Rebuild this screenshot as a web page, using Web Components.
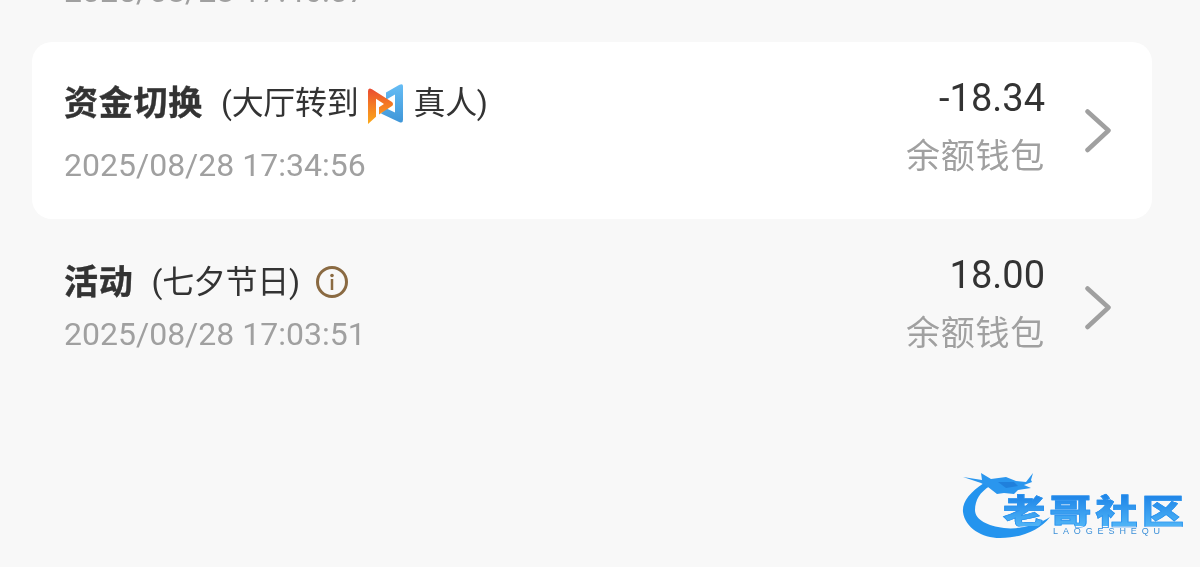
<!DOCTYPE html>
<html lang="zh">
<head>
<meta charset="utf-8">
<style>
	html, body{margin: 0; height: 100%; background: #f8f8f8; overflow: hidden}
	body{font-family: Roboto, "Noto Sans CJK SC", sans-serif}
</style>
</head>
<body>
<ledger-list>
	<ledger-row class="clipped" date="2025/08/28 17:46:07"></ledger-row>
	<ledger-row active date="2025/08/28 17:34:56" amount="-18.34" wallet="余额钱包">
		<span slot="title">资金切换</span>
		<span slot="note">(大厅转到</span>
		<game-logo slot="note"></game-logo>
		<span slot="note">真人)</span>
	</ledger-row>
	<ledger-row date="2025/08/28 17:03:51" amount="18.00" wallet="余额钱包">
		<span slot="title">活动</span>
		<span slot="note">(七夕节日)</span>
		<info-icon slot="note"></info-icon>
	</ledger-row>
</ledger-list>
<site-mark></site-mark>

<script>
class LedgerList extends HTMLElement{
	constructor() {
		super()
		let shadowRoot = this.attachShadow({mode: 'open'})
		shadowRoot.innerHTML = `
			<style>
				:host{
					display: flex;
					flex-direction: column;
					padding: 0 48px 0 32px;
					margin-top: -135px;
					filter: blur(.35px);
				}
			</style>
			<slot></slot>
		`
	}
}

class LedgerRow extends HTMLElement{
	constructor() {
		super()
		let shadowRoot = this.attachShadow({mode: 'open'})
		shadowRoot.innerHTML = `
			<style>
				:host{
					display: grid;
					grid-template-columns: 1fr auto 107px;
					height: 177px;
					box-sizing: border-box;
					padding-left: 32px;
					border-radius: 20px;
					color: #333;
				}
				:host([active]){
					background: #fff;
				}
				.left{
					display: flex;
					flex-direction: column;
					padding-top: 39px;
				}
				:host([active]) .left{
					padding-top: 37px;
				}
				:host(.clipped) .left{
					padding-top: 50px;
				}
				.head{
					display: flex;
					align-items: center;
					height: 42px;
				}
				.title{
					font-size: 34px;
					font-weight: 700;
					letter-spacing: .75px;
					-webkit-text-stroke: .4px #333;
					margin-right: 18px;
				}
				.note{
					display: flex;
					align-items: center;
					font-size: 32px;
					letter-spacing: -.3px;
				}
				.date{
					font-size: 32px;
					line-height: 38px;
					color: #a0a0a0;
					margin-top: 15px;
				}
				:host([active]) .date{
					margin-top: 25px;
				}
				.right{
					display: flex;
					flex-direction: column;
					align-items: flex-end;
					padding-top: 33px;
				}
				.amount{
					font-size: 38px;
					line-height: 46px;
				}
				.wallet{
					font-size: 34px;
					line-height: 46px;
					letter-spacing: .75px;
					color: #a0a0a0;
					margin-top: 12px;
				}
				.arrow{
					display: flex;
					align-items: center;
					justify-content: flex-end;
					padding-right: 38px;
				}
				:host(:not([amount])) .arrow{
					visibility: hidden;
				}
			</style>
			<div class="left">
				<div class="head">
					<span class="title"><slot name="title"></slot></span>
					<span class="note"><slot name="note"></slot></span>
				</div>
				<div class="date"></div>
			</div>
			<div class="right">
				<div class="amount"></div>
				<div class="wallet"></div>
			</div>
			<div class="arrow">
				<svg width="30" height="44" viewBox="0 0 30 44"><path d="M3.5 2.5 L24.5 21.500 L3.5 41" fill="none" stroke="#a0a0a0" stroke-width="4.5" stroke-linecap="round" stroke-linejoin="round"/></svg>
			</div>
		`
	}
	connectedCallback(){
		this.shadowRoot.querySelector(".date").textContent = this.getAttribute("date") || ""
		this.shadowRoot.querySelector(".amount").textContent = this.getAttribute("amount") || ""
		this.shadowRoot.querySelector(".wallet").textContent = this.getAttribute("wallet") || ""
	}
}

class GameLogo extends HTMLElement{
	constructor() {
		super()
		let shadowRoot = this.attachShadow({mode: 'open'})
		shadowRoot.innerHTML = `
			<style>
				:host{
					display: inline-block;
					width: 36px;
					height: 40px;
					margin: 8px 9px 0 10px;
				}
				svg{display: block}
			</style>
			<svg width="36" height="40" viewBox="0 0 36 38" preserveAspectRatio="none">
				<defs>
					<linearGradient id="o" x1="0" y1="1" x2="0" y2="0">
						<stop offset="0" stop-color="#fbaa1c"/>
						<stop offset=".55" stop-color="#f47a24"/>
						<stop offset="1" stop-color="#ea4b32"/>
					</linearGradient>
					<linearGradient id="b" x1="0" y1="0" x2="0" y2="1">
						<stop offset="0" stop-color="#66bdf5"/>
						<stop offset="1" stop-color="#3f96d8"/>
					</linearGradient>
				</defs>
				<path d="M35 2 L35 34 Q35 38 31 36 L13 28 L18 23 L27 27 L27 10 L18 15 L18 8 L31 1 Q35 -1 35 2Z" fill="url(#b)"/>
				<path d="M0 7 Q0 3 4 5 L24 17 Q26 19 24 21 L11 29 L11 22 L16 19 L8 14 L8 31 L0 38Z" fill="url(#o)"/>
			</svg>
		`
	}
}

class InfoIcon extends HTMLElement{
	constructor() {
		super()
		let shadowRoot = this.attachShadow({mode: 'open'})
		shadowRoot.innerHTML = `
			<style>
				:host{
					display: inline-block;
					width: 32px;
					height: 32px;
					margin: 6px 0 0 16px;
				}
				svg{display: block}
			</style>
			<svg width="32" height="32" viewBox="0 0 32 32">
				<circle cx="16" cy="16" r="14.500" fill="none" stroke="#8a6a42" stroke-width="3"/>
				<circle cx="16" cy="9.500" r="1.800" fill="#8a6a42"/>
				<rect x="14.750" y="13" width="2.500" height="11" fill="#8a6a42"/>
			</svg>
		`
	}
}

class SiteMark extends HTMLElement{
	constructor() {
		super()
		let shadowRoot = this.attachShadow({mode: 'open'})
		shadowRoot.innerHTML = `
			<style>
				:host{
					position: absolute;
					left: 960px;
					top: 470px;
					width: 230px;
					height: 75px;
					filter: blur(.6px);
				}
				svg{position: absolute; left: 0; top: 0}
				.name{
					position: absolute;
					left: 43px;
					top: 24px;
					font-family: "Noto Sans CJK SC", sans-serif;
					font-weight: 900;
					font-size: 34px;
					line-height: 32px;
					letter-spacing: 3.3px;
					white-space: nowrap;
					transform: scaleX(1.24);
					transform-origin: left center;
					-webkit-text-stroke: .7px #2a92ee;
					background: linear-gradient(#1c82e6, #4fb4f6);
					-webkit-background-clip: text;
					background-clip: text;
					color: transparent;
				}
				.latin{
					position: absolute;
					left: 93px;
					top: 56px;
					font-family: "Liberation Sans", sans-serif;
					font-size: 9px;
					line-height: 11px;
					letter-spacing: 4.9px;
					white-space: nowrap;
					color: #3a8fd8;
				}
			</style>
			<svg width="230" height="75" viewBox="0 0 230 75">
				<path d="M24 13 C10 22 2 32 3 42 C5 58 22 68 40 68 C62 68 80 60 90 47 C80 54 60 60 44 58 C28 56 15 50 15 40 C15 30 20 22 30 16Z" fill="#2494ee"/>
				<path d="M3 7 L22 10 L21 3 L31 9 L46 7 L56 11 L66 12 L73 3 L71 10 L72 12 L64 15 L71 18 L58 20 L54 24 L44 23 L37 24 L28 17 L21 13Z" fill="#2a96ee"/>
				<path d="M38 12 L54 12 L58 16 L46 18Z" fill="#2080dc"/>
			</svg>
			<div class="name">老哥社区</div>
			<div class="latin">LAOGESHEQU</div>
		`
	}
}

customElements.define("ledger-list", LedgerList)
customElements.define("ledger-row", LedgerRow)
customElements.define("game-logo", GameLogo)
customElements.define("info-icon", InfoIcon)
customElements.define("site-mark", SiteMark)
</script>
</body>
</html>
